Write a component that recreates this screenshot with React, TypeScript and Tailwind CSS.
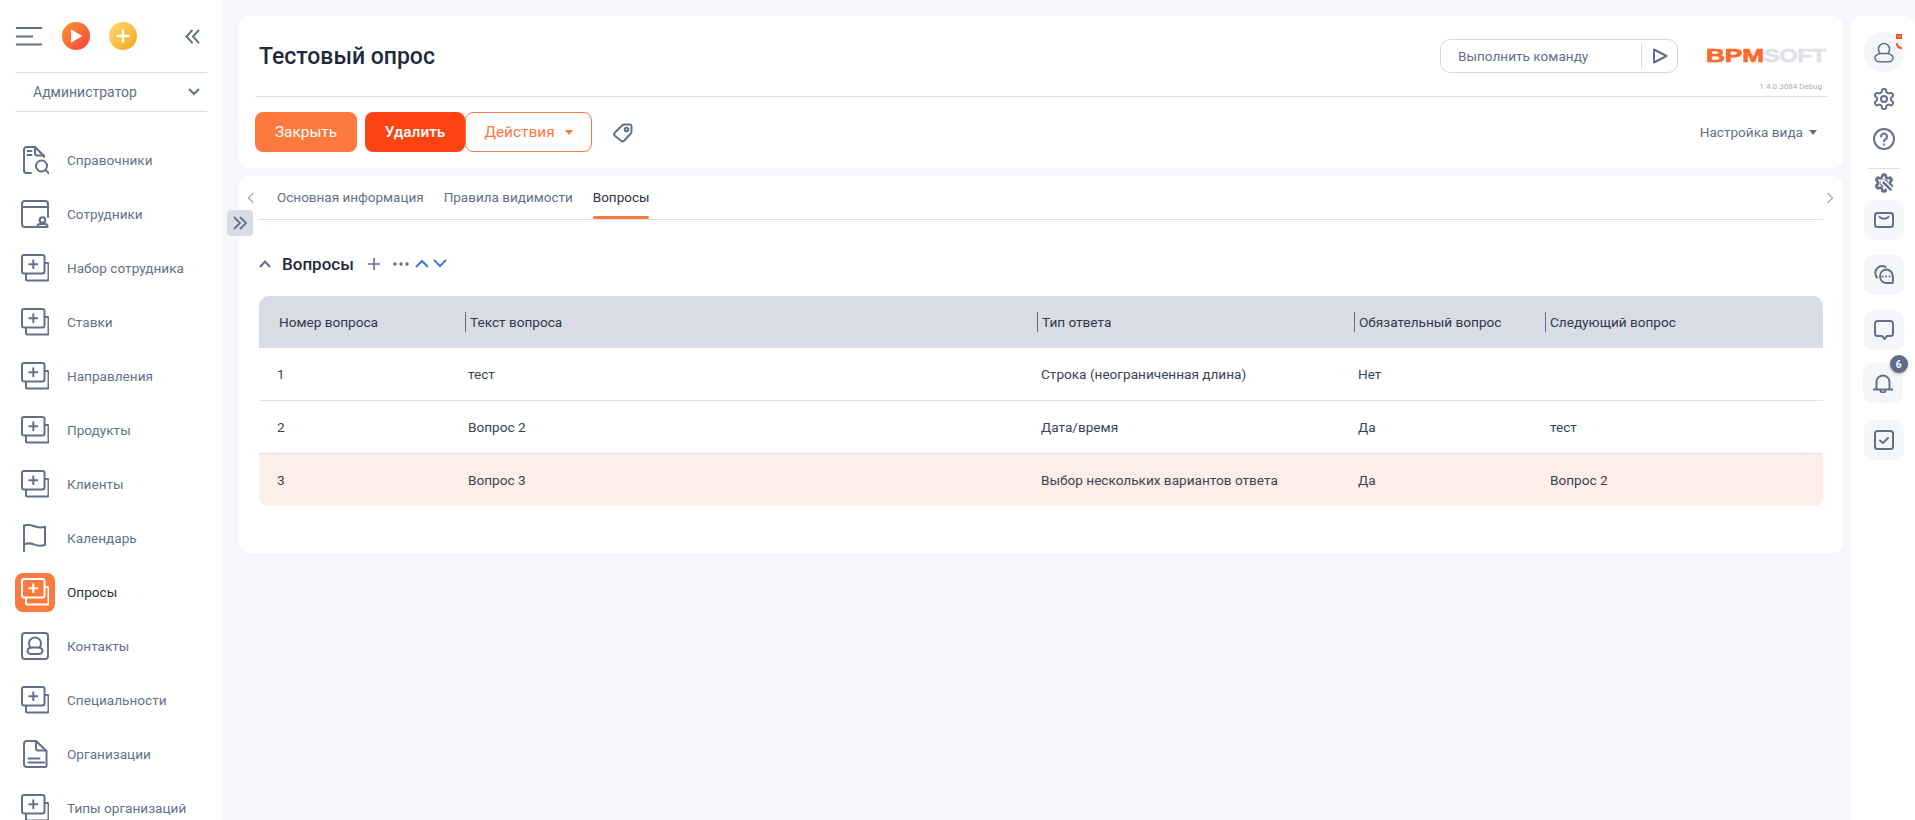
import React from "react";

const S = "#64708a";
const stroke = { fill: "none", stroke: S, strokeWidth: 2, strokeLinecap: "round" as const, strokeLinejoin: "round" as const };

function IconStack({ c = S }: { c?: string }) {
  return (
    <svg width="28" height="28" viewBox="0 0 28 28" fill="none" stroke={c} strokeWidth="2" strokeLinejoin="round" strokeLinecap="round">
      <rect x="1" y="1" width="22.5" height="18.5" rx="2" />
      <path d="M24 9h2.5a1 1 0 0 1 1 1v15.5a1 1 0 0 1-1 1H6a1 1 0 0 1-1-1V20" />
      <path d="M12.3 6.3v8M8.3 10.3h8" />
    </svg>
  );
}
function IconDirectory() {
  return (
    <svg width="28" height="28" viewBox="0 0 28 28" {...stroke}>
      <path d="M10 27H5.5A2.5 2.5 0 0 1 3 24.5V3.500A2.500 2.500 0 0 1 5.500 1H14l9 9v1" />
      <path d="M14 1v6.500a2 2 0 0 0 2 2h7" />
      <path d="M6.500 5h4M6.500 9h4" />
      <circle cx="20.500" cy="20" r="5.500" />
      <path d="M24.500 24l3 3" />
    </svg>
  );
}
function IconWindow() {
  return (
    <svg width="28" height="28" viewBox="0 0 28 28" {...stroke}>
      <path d="M15 27H4a3 3 0 0 1-3-3V4a3 3 0 0 1 3-3h20a3 3 0 0 1 3 3v13" />
      <path d="M1 7h26" />
      <circle cx="21.500" cy="20" r="2.800" />
      <path d="M16.500 27v-.5a2.500 2.500 0 0 1 2.500-2.500h5a2.500 2.500 0 0 1 2.500 2.500v.5z" />
    </svg>
  );
}
function IconFlag() {
  return (
    <svg width="28" height="28" viewBox="0 0 28 28" {...stroke}>
      <path d="M3 29V1.500c3.500-1 7-.6 10.500.8s6.500 1.500 10.500.4v18.300c-4 1.100-7 1-10.500-.4S6.500 19 3 20" />
    </svg>
  );
}
function IconContact() {
  return (
    <svg width="28" height="28" viewBox="0 0 28 28" {...stroke}>
      <rect x="1" y="1" width="26" height="26" rx="3" />
      <path d="M9.500 15.500c-1-1-1.500-2.500-1.500-4a6 6 0 0 1 12 0c0 1.500-.5 3-1.500 4" />
      <path d="M9.500 15.500h9c1.800.6 3 1.700 3 3.200 0 1.800-1.500 3.300-3.500 3.300h-8c-2 0-3.500-1.500-3.500-3.300 0-1.500 1.200-2.600 3-3.200z" />
    </svg>
  );
}
function IconDoc() {
  return (
    <svg width="28" height="28" viewBox="0 0 28 28" {...stroke}>
      <path d="M15 1H6a3 3 0 0 0-3 3v20a3 3 0 0 0 3 3h18a1.500 1.500 0 0 0 1.500-1.500V11z" />
      <path d="M15 1v7.500a2 2 0 0 0 2 2h8" />
      <path d="M7.500 18.500h11M7.500 22.500h15.500" />
    </svg>
  );
}

const items: { label: string; icon: React.ReactNode; active?: boolean }[] = [
  { label: "Справочники", icon: <IconDirectory /> },
  { label: "Сотрудники", icon: <IconWindow /> },
  { label: "Набор сотрудника", icon: <IconStack /> },
  { label: "Ставки", icon: <IconStack /> },
  { label: "Направления", icon: <IconStack /> },
  { label: "Продукты", icon: <IconStack /> },
  { label: "Клиенты", icon: <IconStack /> },
  { label: "Календарь", icon: <IconFlag /> },
  { label: "Опросы", icon: <IconStack c="#ffffff" />, active: true },
  { label: "Контакты", icon: <IconContact /> },
  { label: "Специальности", icon: <IconStack /> },
  { label: "Организации", icon: <IconDoc /> },
  { label: "Типы организаций", icon: <IconStack /> },
];

function Sidebar() {
  return (
    <aside className="w-[223px] h-[820px] shrink-0 bg-white overflow-hidden">
      <div className="h-[72px] pl-[15px] pr-[23px] flex items-center">
        <svg width="28" height="20" viewBox="0 0 28 20" {...stroke}>
          <path d="M1 2h26M1 10.500h17M1 18.500h26" strokeLinecap="butt" />
        </svg>
        <div className="w-[28px] h-[28px] ml-[19px] rounded-full bg-linear-to-br from-[#fb9324] to-[#f9363f] flex items-center justify-center">
          <svg width="12" height="14" viewBox="0 0 12 14"><path d="M1 1.200v11.600a.6.6 0 0 0 .9.5l9.600-5.800a.6.6 0 0 0 0-1L1.900.700a.6.6 0 0 0-.9.5z" fill="#fff" /></svg>
        </div>
        <div className="w-[28px] h-[28px] ml-[19px] rounded-full bg-linear-to-br from-[#fddc6c] to-[#f3a60f] flex items-center justify-center">
          <svg width="14" height="14" viewBox="0 0 14 14" fill="none" stroke="#fff" strokeWidth="2.400" strokeLinecap="round"><path d="M7 1.500v11M1.500 7h11" /></svg>
        </div>
        <svg className="ml-auto" width="15" height="15" viewBox="0 0 15 15" fill="none" stroke={S} strokeWidth="2" strokeLinejoin="miter">
          <path d="M7.500 .8L1.500 7.500l6 6.700M14 .8L8 7.500l6 6.700" />
        </svg>
      </div>
      <div className="ml-[15px] mr-[16px] h-[40px] border-y border-[#dcdee6] flex items-center justify-between pl-[18px] pr-[7px] text-[14px] text-[#64708a]">
        <span>Администратор</span>
        <svg width="12" height="8" viewBox="0 0 12 8" fill="none" stroke={S} strokeWidth="2"><path d="M1 1l5 5 5-5" /></svg>
      </div>
      <nav className="mt-[21px]">
        {items.map((it) => (
          <div key={it.label} className="h-[54px] pl-[15px] flex items-center gap-[12px]">
            <div className={it.active ? "w-[40px] h-[39px] rounded-[8px] bg-[#fc7a3e] flex items-center justify-center" : "w-[40px] h-[39px] flex items-center justify-center"}>
              {it.icon}
            </div>
            <span className={it.active ? "text-[13.6px] text-[#2a3446]" : "text-[13.6px] text-[#64708a]"}>{it.label}</span>
          </div>
        ))}
      </nav>
    </aside>
  );
}

function HeaderCard() {
  return (
    <section className="h-[152px] bg-white rounded-[10px] px-[16px]">
      <div className="h-[81px] border-b border-[#dcdee6] flex items-start pt-[23px]">
        <h1 className="flex-1 pl-[4px] pt-px text-[23px] leading-[34px] font-medium text-[#1f2a3c]">Тестовый опрос</h1>
        <div className="w-[238px] h-[34px] border border-[#d5d8e0] rounded-[10px] flex items-center">
          <span className="flex-1 pl-[17px] pt-px text-[13.6px] text-[#64708a]">Выполнить команду</span>
          <div className="w-[36px] h-[24px] border-l border-[#d5d8e0] flex items-center justify-center">
            <svg width="16" height="16" viewBox="0 0 16 16" fill="none" stroke={S} strokeWidth="2" strokeLinejoin="round"><path d="M2 1.500v13L14.500 8z" /></svg>
          </div>
        </div>
        <div className="w-[120px] ml-[28px] mr-px flex flex-col items-end">
          <svg className="mt-[8px]" width="120" height="18" viewBox="0 0 120 18">
            <text x="0" y="15" textLength="58" lengthAdjust="spacingAndGlyphs" fontFamily="'Liberation Sans', sans-serif" fontWeight="700" fontSize="18" fill="#fb6b2c" stroke="#fb6b2c" strokeWidth="0.700">BPM</text>
            <text x="58" y="15" textLength="62" lengthAdjust="spacingAndGlyphs" fontFamily="'Liberation Sans', sans-serif" fontWeight="700" fontSize="18" fill="#dfe1e7" stroke="#dfe1e7" strokeWidth="0.700">SOFT</text>
          </svg>
          <span className="mt-[16px] mr-[4px] text-[8px] leading-[12px] text-[#a9adb8] whitespace-nowrap">1.4.0.3084 Debug</span>
        </div>
      </div>
      <div className="flex items-center pt-[15px]">
        <button className="w-[102px] h-[40px] pt-px rounded-[8px] bg-[#fc7a3e] text-white text-[15.4px]">Закрыть</button>
        <button className="w-[100px] h-[40px] pt-px ml-[8px] rounded-[8px] bg-[#fe4313] text-white text-[15.4px] font-medium">Удалить</button>
        <button className="w-[127px] h-[40px] pt-px rounded-[8px] bg-white border border-[#fc7a3e] text-[#fc7a3e] text-[15.4px] flex items-center justify-center gap-[10px]">
          <span>Действия</span>
          <svg width="8" height="5" viewBox="0 0 8 5"><path d="M0 0h8L4 5z" fill="#fc7a3e" /></svg>
        </button>
        <svg className="ml-[20px] mt-[2px]" width="22" height="22" viewBox="0 0 22 22" {...stroke}>
          <path d="M12.500 2.500h5a2 2 0 0 1 2 2v5c0 1-.5 1.800-1.200 2.500l-6 6.500a2.500 2.500 0 0 1-3.500 0L3 14a2.500 2.500 0 0 1 0-3.500L9.800 3.700c.8-.8 1.700-1.200 2.700-1.200z" />
          <circle cx="14.500" cy="7.500" r="1.800" />
        </svg>
        <div className="ml-auto mr-[10px] pt-px flex items-center gap-[6px] text-[13.6px] text-[#64708a]">
          <span>Настройка вида</span>
          <svg width="8" height="5" viewBox="0 0 8 5"><path d="M0 0h8L4 5z" fill={S} /></svg>
        </div>
      </div>
    </section>
  );
}

const cols = "grid grid-cols-[206px_572px_317px_191px_278px]";
const heads = ["Номер вопроса", "Текст вопроса", "Тип ответа", "Обязательный вопрос", "Следующий вопрос"];
const rows = [
  ["1", "тест", "Строка (неограниченная длина)", "Нет", ""],
  ["2", "Вопрос 2", "Дата/время", "Да", "тест"],
  ["3", "Вопрос 3", "Выбор нескольких вариантов ответа", "Да", "Вопрос 2"],
];
const cellPad = ["pl-[18px]", "pl-[3px]", "pl-[4px]", "pl-[4px]", "pl-[5px]"];

function TabsCard() {
  return (
    <section className="relative mt-[8px] h-[377px] bg-white rounded-[10px]">
      <div className="flex h-[44px]">
        <div className="w-[20px] flex items-center justify-center pl-[3px]">
          <svg width="8" height="12" viewBox="0 0 8 12" fill="none" stroke="#b0b4be" strokeWidth="1.600"><path d="M6.500 1L1.500 6l5 5" /></svg>
        </div>
        <div className="flex-1 border-b border-[#dcdee6] flex pl-[18px] gap-[20px] text-[13.5px] text-[#64708a]">
          <div className="h-[43px] flex items-center">Основная информация</div>
          <div className="h-[43px] flex items-center">Правила видимости</div>
          <div className="relative h-[43px] flex items-center text-[#2a3446]">
            Вопросы
            <span className="absolute left-0 right-0 bottom-0 h-[3px] rounded-[2px] bg-[#fc7a3e]" />
          </div>
        </div>
        <div className="w-[20px] flex items-center pl-[3px]">
          <svg width="8" height="12" viewBox="0 0 8 12" fill="none" stroke="#b0b4be" strokeWidth="1.600"><path d="M1.500 1l5 5-5 5" /></svg>
        </div>
      </div>
      <div className="mt-[28px] h-[32px] ml-[20px] flex items-center">
        <svg width="12" height="8" viewBox="0 0 12 8" fill="none" stroke={S} strokeWidth="2"><path d="M1 7l5-5.500L11 7" /></svg>
        <span className="ml-[11px] pt-px text-[17px] font-medium text-[#1f2a3c]">Вопросы</span>
        <svg className="ml-[13px]" width="14" height="14" viewBox="0 0 14 14" fill="none" stroke={S} strokeWidth="1.600"><path d="M7 1v12M1 7h12" /></svg>
        <svg className="ml-[12px]" width="16" height="4" viewBox="0 0 16 4" fill={S}><circle cx="2" cy="2" r="1.700" /><circle cx="8" cy="2" r="1.700" /><circle cx="14" cy="2" r="1.700" /></svg>
        <svg className="ml-[6px] mb-[2px]" width="14" height="9" viewBox="0 0 14 9" fill="none" stroke="#4a78d8" strokeWidth="2"><path d="M1 8l6-6 6 6" /></svg>
        <svg className="ml-[4px] mb-[2px]" width="14" height="9" viewBox="0 0 14 9" fill="none" stroke="#4a78d8" strokeWidth="2"><path d="M1 1l6 6 6-6" /></svg>
      </div>
      <div className="mt-[16px] mx-[20px] text-[13.6px]">
        <div className={`${cols} h-[52px] items-center bg-[#d9dce4] rounded-t-[10px] text-[#2e3a4f]`}>
          {heads.map((h, i) =>
            i === 0 ? (
              <div key={h} className="pl-[20px]">{h}</div>
            ) : (
              <div key={h} className="h-[20px] border-l border-[#64708a] pl-[4px] leading-[20px] whitespace-nowrap">{h}</div>
            )
          )}
        </div>
        {rows.map((r, ri) => (
          <div key={ri} className={ri === 2 ? `${cols} h-[52px] items-center bg-[#feeee8] rounded-b-[8px] text-[#3a4356]` : `${cols} h-[53px] items-center border-b border-[#dfe1e6] text-[#3a4356]`}>
            {r.map((c, ci) => (
              <div key={ci} className={cellPad[ci]}>{c}</div>
            ))}
          </div>
        ))}
      </div>
    </section>
  );
}

function RightBtn({ children, className = "" }: { children: React.ReactNode; className?: string }) {
  return <div className={`relative w-[40px] h-[40px] rounded-[10px] bg-[#f4f6fa] flex items-center justify-center ${className}`}>{children}</div>;
}

const gear =
  "M12.220 2h-.44a2 2 0 0 0-2 2v.18a2 2 0 0 1-1 1.730l-.43.250a2 2 0 0 1-2 0l-.15-.08a2 2 0 0 0-2.730.730l-.22.380a2 2 0 0 0 .730 2.730l.15.100a2 2 0 0 1 1 1.720v.510a2 2 0 0 1-1 1.740l-.15.090a2 2 0 0 0-.730 2.730l.22.380a2 2 0 0 0 2.730.730l.15-.08a2 2 0 0 1 2 0l.43.250a2 2 0 0 1 1 1.730V20a2 2 0 0 0 2 2h.44a2 2 0 0 0 2-2v-.18a2 2 0 0 1 1-1.730l.43-.250a2 2 0 0 1 2 0l.15.08a2 2 0 0 0 2.730-.730l.22-.390a2 2 0 0 0-.730-2.730l-.15-.080a2 2 0 0 1-1-1.740v-.500a2 2 0 0 1 1-1.740l.15-.090a2 2 0 0 0 .730-2.730l-.22-.380a2 2 0 0 0-2.730-.730l-.15.080a2 2 0 0 1-2 0l-.43-.250a2 2 0 0 1-1-1.730V4a2 2 0 0 0-2-2z";

function RightPanel() {
  return (
    <aside className="mt-[16px] ml-[8px] w-[64px] h-[804px] bg-white rounded-t-[10px] flex flex-col items-center pl-px">
      <div className="relative mt-[16px] w-[40px] h-[40px] rounded-full bg-[#f4f6fa] flex items-center justify-center">
        <svg width="20" height="22" viewBox="0 0 20 22" {...stroke} strokeWidth="1.500">
          <path d="M6 12.500c-1-1-1.500-2.500-1.500-4.500a5.500 5.500 0 0 1 11 0c0 2-.5 3.500-1.500 4.500" />
          <path d="M6 12.500h8c3 .8 5 2.300 5 4.500 0 2.200-2 3.800-4 3.800H5c-2 0-4-1.600-4-3.800 0-2.200 2-3.700 5-4.500z" />
        </svg>
        <svg className="absolute right-[2px] top-[2px]" width="6" height="5" viewBox="0 0 6 5">
          <rect width="6" height="5" fill="#fe4d13" />
          <path d="M1 1.500l2 1.500 2-1.500" fill="none" stroke="#fff" strokeWidth="0.700" />
        </svg>
        <svg className="absolute right-[2px] top-[11px]" width="6" height="6" viewBox="0 0 6 6" fill="none" stroke="#fe4d13" strokeWidth="2" strokeLinecap="round">
          <path d="M1 1c0 2 2 4 4 4" />
        </svg>
      </div>
      <svg className="mt-[15px]" width="24" height="24" viewBox="0 0 24 24" fill="none" stroke={S} strokeWidth="2" strokeLinecap="round" strokeLinejoin="round">
        <path d={gear} />
        <circle cx="12" cy="12" r="3" />
      </svg>
      <svg className="mt-[17px]" width="22" height="22" viewBox="0 0 22 22" fill="none" stroke={S} strokeWidth="2" strokeLinecap="round">
        <circle cx="11" cy="11" r="10" />
        <path d="M8 8.500a3 3 0 1 1 4.500 2.600c-1 .6-1.500 1.200-1.500 2.200" />
        <path d="M11 16.500v.2" />
      </svg>
      <div className="mt-[18px] w-[32px] border-t border-[#dcdee6]" />
      <svg className="mt-[4px]" width="20" height="20" viewBox="0 0 24 24" fill="none" stroke={S} strokeWidth="3.200" strokeLinecap="round" strokeLinejoin="round">
        <path d={gear} />
        <circle cx="12" cy="12" r="3.500" strokeWidth="2.500" />
        <path d="M11 11l10 10" stroke="#ffffff" strokeWidth="6.500" />
        <path d="M11.500 11.500l8.500 8.500" strokeWidth="3" />
      </svg>
      <RightBtn className="mt-[7px]">
        <svg width="20" height="16" viewBox="0 0 20 16" {...stroke}><rect x="1" y="1" width="18" height="14" rx="2.500" /><path d="M5.500 5c2.800 2.200 6.200 2.200 9 0" /></svg>
      </RightBtn>
      <RightBtn className="mt-[15px]">
        <svg width="20" height="20" viewBox="0 0 20 20" {...stroke}>
          <path d="M3 12.500A7 7 0 0 1 3.500 3a7 7 0 0 1 8-1" />
          <path d="M12 4.500a6.800 6.800 0 0 1 6.900 6.800V17a1 1 0 0 1-1 1H12a6.800 6.800 0 0 1 0-13.500z" />
          <path d="M8.500 11.500h.3M12 11.500h.3M15.500 11.500h.3" strokeWidth="1.800" />
        </svg>
      </RightBtn>
      <RightBtn className="mt-[15px]">
        <svg width="20" height="20" viewBox="0 0 20 20" {...stroke}><path d="M3.500 1h13A2.500 2.500 0 0 1 19 3.500v10a2.500 2.500 0 0 1-2.500 2.500H13l-2.500 3L8 16H3.500A2.500 2.500 0 0 1 1 13.500v-10A2.500 2.500 0 0 1 3.500 1z" /></svg>
      </RightBtn>
      <RightBtn className="mt-[13px] -ml-[2px]">
        <svg width="20" height="20" viewBox="0 0 20 20" {...stroke}><path d="M.500 16.500h19M3.500 16.500V9a6.500 6.500 0 0 1 13 0v7.500M7.500 17a2.500 2.500 0 0 0 5 0" /></svg>
        <span className="absolute right-[-5px] top-[-8px] w-[18px] h-[18px] rounded-full bg-[#5f6b85] text-white text-[10px] font-bold flex items-center justify-center shadow-[0_1px_3px_rgba(0,0,0,0.3)]">6</span>
      </RightBtn>
      <RightBtn className="mt-[17px]">
        <svg width="20" height="20" viewBox="0 0 20 20" {...stroke}><rect x="1" y="1" width="18" height="18" rx="2.500" /><path d="M6 10.500l2.800 2.500L14 8" /></svg>
      </RightBtn>
    </aside>
  );
}

export default function App() {
  return (
    <div className="flex w-[1915px] h-[820px] overflow-hidden bg-[#f5f7fb] font-['Roboto','Liberation_Sans',sans-serif]">
      <Sidebar />
      <main className="ml-[16px] mt-[16px] w-[1604px] shrink-0">
        <HeaderCard />
        <TabsCard />
      </main>
      <RightPanel />
      <button aria-label="Развернуть" className="fixed left-[227px] top-[210px] w-[26px] h-[26px] rounded-[4px] bg-[#d9dce4] flex items-center justify-center">
        <svg width="16" height="14" viewBox="0 0 16 14" fill="none" stroke={S} strokeWidth="1.800"><path d="M2 1l6 6-6 6M8 1l6 6-6 6" /></svg>
      </button>
    </div>
  );
}
